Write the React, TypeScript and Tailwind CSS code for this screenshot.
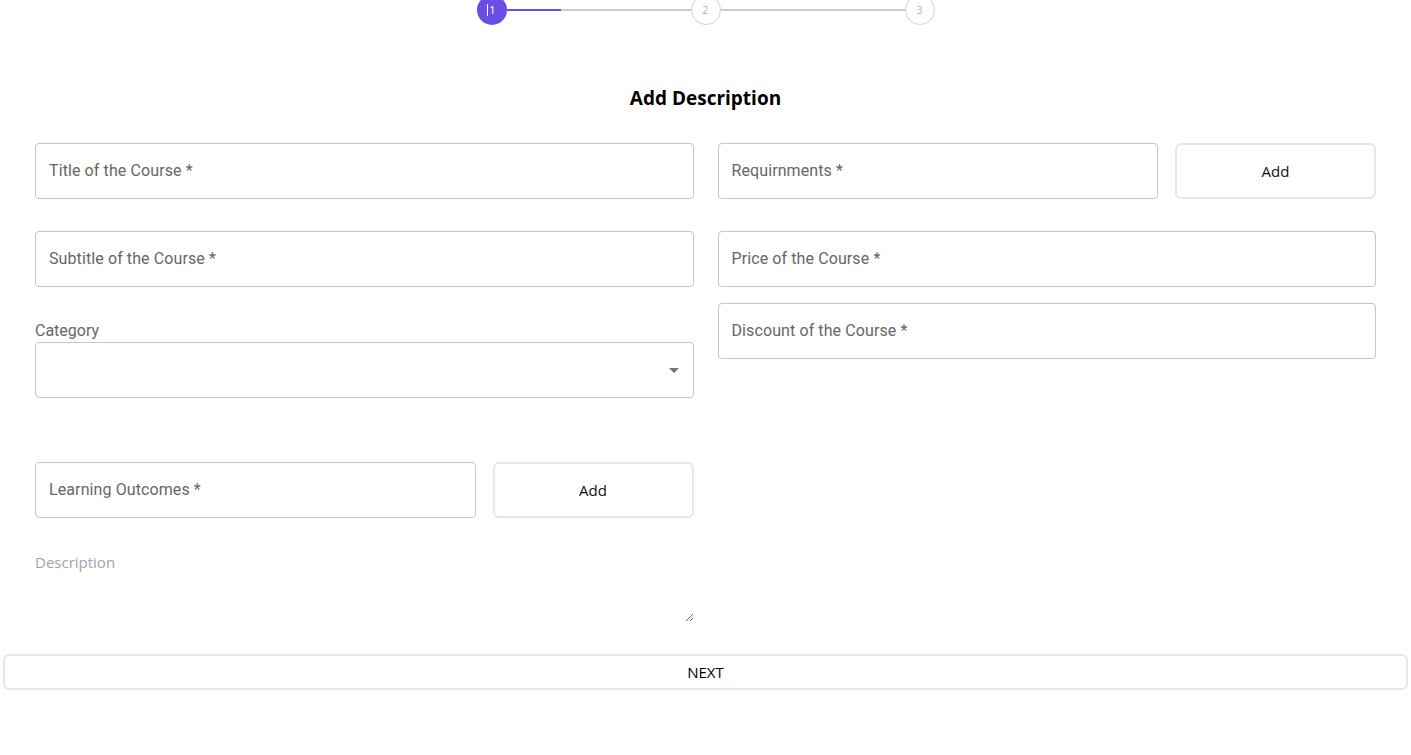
import React from "react";

const roboto = { fontFamily: "Roboto, 'Liberation Sans', sans-serif" };

const Field = ({ label }: { label: string }) => (
  <div className="h-[56px] w-full rounded-[4px] border border-[#c4c4c4] flex items-center px-[13px]">
    <span className="text-[16px] text-[#666666] tracking-[0.1px]" style={roboto}>
      {label}
    </span>
  </div>
);

const AddButton = () => (
  <button className="h-[56px] w-[201px] shrink-0 rounded-[6px] border-2 border-[#e6e6ec] bg-white text-[15px] text-[#111] font-['Open_Sans',sans-serif]">
    Add
  </button>
);

const Stepper = () => (
  <div className="flex items-center justify-center -mt-[5px]">
    <div className="w-[30px] h-[30px] rounded-full bg-[#6a4ee6] flex items-center justify-center text-white text-[11px] font-['Open_Sans',sans-serif]">
      <span className="w-px h-[12px] bg-white mr-[1px]" />1
    </div>
    <div className="w-[184px] h-[2px] flex">
      <div className="w-[54px] bg-[#6a4ee6]" />
      <div className="flex-1 bg-[#cccccc]" />
    </div>
    <div className="w-[30px] h-[30px] rounded-full border border-[#d4d4d4] flex items-center justify-center text-[#b5b5b5] text-[11px] font-['Open_Sans',sans-serif]">
      2
    </div>
    <div className="w-[184px] h-[2px] bg-[#cccccc]" />
    <div className="w-[30px] h-[30px] rounded-full border border-[#d4d4d4] flex items-center justify-center text-[#b5b5b5] text-[11px] font-['Open_Sans',sans-serif]">
      3
    </div>
  </div>
);

export default function App() {
  return (
    <div className="min-h-[755px] bg-white overflow-hidden">
      <Stepper />

      <h2 className="mt-[59px] h-[28px] leading-[28px] text-center text-[19px] font-bold text-black font-['Open_Sans',sans-serif]">
        Add Description
      </h2>

      <div className="px-[35px] mt-[31px]">
        <div className="grid grid-cols-2 gap-x-6 items-start">
          {/* left column */}
          <div className="flex flex-col">
            <Field label="Title of the Course *" />
            <div className="mt-[32px]">
              <Field label="Subtitle of the Course *" />
            </div>
            <label className="mt-[34px] h-[19px] leading-[19px] text-[16px] text-[#666666]" style={roboto}>
              Category
            </label>
            <div className="mt-[2px] h-[56px] w-full rounded-[4px] border border-[#c4c4c4] flex items-center justify-end pr-[14px]">
              <svg width="10" height="5" viewBox="0 0 10 5">
                <path d="M0 0 L10 0 L5 5 Z" fill="#757575" />
              </svg>
            </div>
            <div className="mt-[64px] flex gap-[17px]">
              <Field label="Learning Outcomes *" />
              <AddButton />
            </div>
            <textarea
              placeholder="Description"
              className="mt-[33px] h-[71px] w-full outline-none border-0 p-0 text-[15px] text-[#333] placeholder:text-[#9ca3af] font-['Open_Sans',sans-serif]"
            />
          </div>

          {/* right column */}
          <div className="flex flex-col">
            <div className="flex gap-[17px]">
              <Field label="Requirnments *" />
              <AddButton />
            </div>
            <div className="mt-[32px]">
              <Field label="Price of the Course *" />
            </div>
            <div className="mt-[16px]">
              <Field label="Discount of the Course *" />
            </div>
          </div>
        </div>
      </div>

      <div className="px-[3px] mt-[32px]">
        <button className="w-full h-[36px] rounded-[6px] border-2 border-[#e6e6ec] bg-white text-[15px] text-black font-['Open_Sans',sans-serif]">
          NEXT
        </button>
      </div>
    </div>
  );
}
